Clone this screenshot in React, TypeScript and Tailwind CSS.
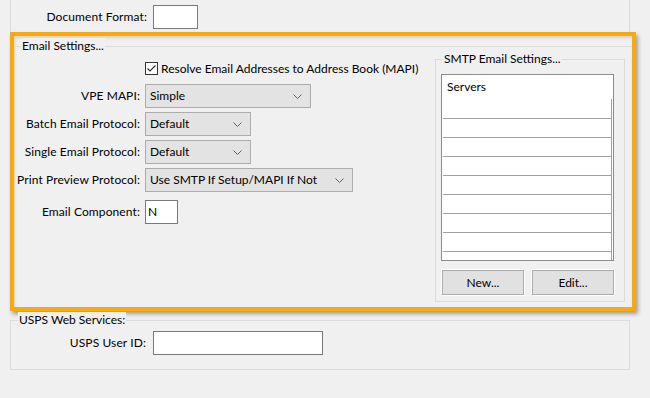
import React from "react";

const font = { fontFamily: 'Lato, "Liberation Sans", sans-serif' };

function Chevron() {
  return (
    <svg width="9" height="5" viewBox="0 0 9 5" className="shrink-0">
      <path d="M0.5 0.5 L4.5 4.5 L8.5 0.5" fill="none" stroke="#606060" strokeWidth="1" />
    </svg>
  );
}

function Combo({ value, w }: { value: string; w: string }) {
  return (
    <div className={`${w} h-[24px] bg-[#e3e3e3] border border-[#adadad] flex items-center pl-[4px] pr-[8px]`}>
      <span className="flex-1 leading-none whitespace-nowrap">{value}</span>
      <Chevron />
    </div>
  );
}

function Row({ label, children, mt }: { label: string; children: React.ReactNode; mt: string }) {
  return (
    <div className={`flex items-center ${mt}`}>
      <div className="w-[125px] text-right leading-none whitespace-nowrap tracking-[0.1px]">{label}</div>
      <div className="ml-[5px]">{children}</div>
    </div>
  );
}

export default function App() {
  return (
    <div className="w-[650px] h-[398px] bg-[#f0f0f0] overflow-hidden text-[12px] text-black" style={font}>
      {/* top group remainder */}
      <div className="ml-[10px] w-[620px] h-[32px] border-x border-[#dcdcdc] flex items-start pt-[5px]">
        <div className="w-[136px] h-[24px] flex items-center justify-end whitespace-nowrap tracking-[0.1px]">Document Format:</div>
        <div className="ml-[6px] w-[45px] h-[24px] bg-white border border-[#7a7a7a]" />
      </div>

      {/* highlighted box */}
      <div className="ml-[10px] w-[626px] h-[279px] border-4 border-[#f9a90b] shadow-[2px_3px_4px_rgba(0,0,0,0.35),inset_1px_2px_3px_rgba(0,0,0,0.12)] flex flex-col">
        <div className="relative mt-[10px] flex-1 border-t border-l border-[#dcdcdc] flex">
          <div className="absolute left-[6px] -top-[9px] bg-[#f0f0f0] px-[1px] leading-[16px] whitespace-nowrap">Email Settings...</div>

          {/* left column */}
          <div className="flex flex-col">
            <div className="flex items-center mt-[15px] ml-[130px]">
              <div className="w-[13px] h-[13px] bg-white border border-[#333] flex items-center justify-center">
                <svg width="11" height="11" viewBox="0 0 11 11">
                  <path d="M1.5 5.5 L4 8 L9.5 2.5" fill="none" stroke="#333" strokeWidth="1.2" />
                </svg>
              </div>
              <span className="ml-[3px] leading-none whitespace-nowrap">Resolve Email Addresses to Address Book (MAPI)</span>
            </div>
            <Row label="VPE MAPI:" mt="mt-[9px]">
              <Combo value="Simple" w="w-[166px]" />
            </Row>
            <Row label="Batch Email Protocol:" mt="mt-[4px]">
              <Combo value="Default" w="w-[106px]" />
            </Row>
            <Row label="Single Email Protocol:" mt="mt-[4px]">
              <Combo value="Default" w="w-[106px]" />
            </Row>
            <Row label="Print Preview Protocol:" mt="mt-[4px]">
              <Combo value="Use SMTP If Setup/MAPI If Not" w="w-[208px]" />
            </Row>
            <Row label="Email Component:" mt="mt-[8px]">
              <div className="w-[33px] h-[24px] bg-white border border-[#7a7a7a] flex items-center pl-[2px] leading-none">N</div>
            </Row>
          </div>

          {/* SMTP group */}
          <div className="relative ml-auto mr-[7px] mt-[12px] w-[190px] h-[243px] border border-[#dcdcdc] flex flex-col">
            <div className="absolute left-[7px] -top-[9px] bg-[#f0f0f0] px-[1px] leading-[16px] whitespace-nowrap">SMTP Email Settings...</div>
            <div className="relative ml-[5px] mt-[14px] w-[173px] h-[187px] bg-white border border-[#8c8c8c] overflow-hidden flex flex-col">
              <div className="h-[43px] shrink-0 pl-[5px] pt-[4px] leading-[16px]">Servers</div>
              {Array.from({ length: 8 }).map((_, i) => (
                <div key={i} className="ml-[1px] w-[169px] h-[19px] shrink-0 border-t border-[#a0a0a0]" />
              ))}
              <div className="absolute right-[1px] top-[24px] bottom-0 w-px bg-[#a0a0a0]" />
            </div>
            <div className="flex ml-[6px] mt-[9px] gap-[8px]">
              <div className="w-[82px] h-[25px] bg-[#e1e1e1] border border-[#adadad] shadow-[1px_1px_0_#fff,-1px_-1px_0_#fff] flex items-center justify-center">New...</div>
              <div className="w-[82px] h-[25px] bg-[#e1e1e1] border border-[#adadad] shadow-[1px_1px_0_#fff,-1px_-1px_0_#fff] flex items-center justify-center">Edit...</div>
            </div>
          </div>
        </div>
      </div>

      {/* USPS group */}
      <div className="relative ml-[10px] mt-[9px] w-[620px] h-[50px] border border-[#dcdcdc] flex items-start">
        <div className="absolute left-[7px] -top-[9px] bg-[#f0f0f0] px-[1px] leading-[16px] whitespace-nowrap">USPS Web Services:</div>
        <div className="flex items-center mt-[10px]">
          <div className="w-[135px] text-right leading-none whitespace-nowrap tracking-[0.1px]">USPS User ID:</div>
          <div className="ml-[7px] w-[170px] h-[24px] bg-white border border-[#7a7a7a]" />
        </div>
      </div>
    </div>
  );
}
